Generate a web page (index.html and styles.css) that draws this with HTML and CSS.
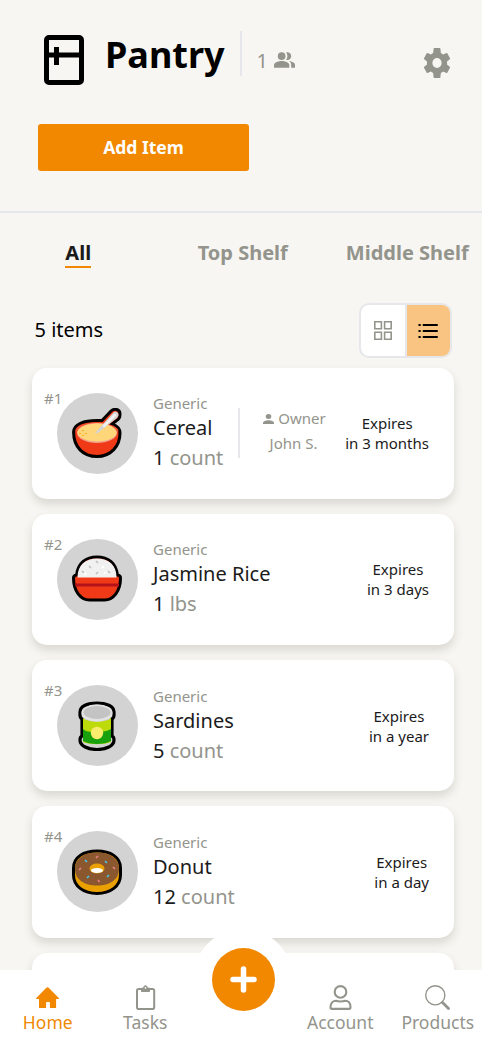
FILE: index.html
```html
<!DOCTYPE html>
<html lang="en">
<head>
<meta charset="utf-8">
<meta name="viewport" content="width=device-width, initial-scale=1">
<title>Pantry</title>
<link rel="stylesheet" href="styles.css">
</head>
<body>
<div class="app">
  <header class="header">
    <div class="title-row">
      <svg class="fridge" viewBox="0 0 40 50" fill="none" stroke="#000" stroke-width="5"><rect x="2.5" y="2.5" width="35" height="45" rx="2.5"/><path d="M3 20h34M12.5 12v18"/></svg>
      <h1 class="title">Pantry</h1>
      <div class="members"><span>1</span>
        <svg class="people" viewBox="1 4 22 16" fill="currentColor"><path d="M16.67 13.13C18.04 14.06 19 15.32 19 17v3h4v-3c0-2.18-3.57-3.47-6.33-3.87zM15 12c2.21 0 4-1.79 4-4s-1.79-4-4-4c-.47 0-.91.1-1.33.24C14.5 5.27 15 6.58 15 8s-.5 2.73-1.33 3.76c.42.14.86.24 1.33.24z"/><circle cx="9" cy="8" r="4"/><path d="M9 13c-2.67 0-8 1.34-8 4v3h16v-3c0-2.66-5.33-4-8-4z"/></svg>
      </div>
      <svg class="gear" viewBox="2 2 20 20" preserveAspectRatio="none" fill="currentColor"><path d="M19.14 12.94c.04-.3.06-.61.06-.94 0-.32-.02-.64-.07-.94l2.03-1.58c.18-.14.23-.41.12-.61l-1.92-3.32c-.12-.22-.37-.29-.59-.22l-2.39.96c-.5-.38-1.03-.7-1.62-.94L14.4 2.410c-.04-.24-.24-.41-.48-.41h-3.84c-.24 0-.43.17-.47.41l-.36 2.940c-.59.24-1.13.57-1.62.94l-2.39-.96c-.22-.08-.47 0-.59.22L2.740 8.870c-.12.21-.08.47.12.61l2.030 1.580c-.05.3-.09.63-.09.94s.02.64.07.94l-2.030 1.580c-.18.14-.23.41-.12.61l1.920 3.320c.12.22.37.29.59.22l2.390-.96c.5.38 1.030.7 1.620.94l.36 2.940c.05.24.24.41.48.41h3.840c.24 0 .44-.17.47-.41l.36-2.940c.59-.24 1.130-.56 1.620-.94l2.390.96c.22.08.47 0 .59-.22l1.920-3.320c.12-.22.07-.47-.12-.61l-2.010-1.580zM12 15.300A3.300 3.300 0 1 1 12 8.700a3.300 3.300 0 0 1 0 6.600z"/></svg>
    </div>
    <button class="add">Add Item</button>
  </header>
  <nav class="tabs">
    <div class="tab active"><span>All</span></div>
    <div class="tab"><span>Top Shelf</span></div>
    <div class="tab"><span>Middle Shelf</span></div>
  </nav>
  <div class="toolbar">
    <span class="count">5 items</span>
    <div class="toggle">
      <div class="view"><svg width="18" height="19" viewBox="0 0 18 19" fill="none" stroke="#93948c" stroke-width="1.6"><path d="M.8.8h6.6v6.9H.8zM10.6.8h6.6v6.9h-6.6zM.8 11.3h6.6v6.9H.8zM10.6 11.3h6.6v6.9h-6.6z"/></svg></div>
      <div class="view on"><svg width="20" height="16" viewBox="0 0 20 16" fill="none" stroke="#000" stroke-width="2"><path d="M5.5 2H19M5.5 8H19M5.5 14H19" stroke-linecap="round"/><path d="M.5 2h2.2M.5 8h2.2M.5 14h2.2" stroke-width="2.2"/></svg></div>
    </div>
  </div>
  <main class="list">
    <article class="card">
      <span class="num">#1</span>
      <div class="avatar"><svg viewBox="0 0 50 50"><path d="M1.6 24C1.6 16 12 12.500 25 12.500h5L39 3C42 .2 48 1 48 6c0 4-1 5-4 7l-4 3q8 3 8 9c0 13-9 23.500-23 23.500S1.600 39 1.600 24z" fill="#f03a17" stroke="#000" stroke-width="3"/><path d="M3.500 22c4-10 37-10 43 0-2 12-39 12-43 0z" fill="#f3502c"/><ellipse cx="25" cy="25" rx="20" ry="10" fill="#f3a08b"/><ellipse cx="25" cy="24.500" rx="19.500" ry="9" fill="#ffd67a"/><path d="M23 25 40 6q3-4 5.500-1.500t-1 6L28 23q-2 3-5 2z" fill="#d3d3d3"/><path d="m32 18 11-11" stroke="#f2f2f2" stroke-width="2.500" stroke-linecap="round"/><path d="M11 22v1M8 25v1M14 25v1M11 27v1" stroke="#f9a000" stroke-width="1.500"/></svg></div>
      <div class="info"><small>Generic</small><b>Cereal</b><p>1 <i>count</i></p></div>
      <div class="owner"><span><svg viewBox="4 4 16 16" preserveAspectRatio="none" fill="currentColor"><circle cx="12" cy="8" r="4"/><path d="M12 14c-2.670 0-8 1.340-8 4v2h16v-2c0-2.660-5.330-4-8-4z"/></svg>Owner</span><span class="person">John S.</span></div>
      <div class="expires">Expires<br>in 3 months</div>
    </article>
    <article class="card">
      <span class="num">#2</span>
      <div class="avatar"><svg viewBox="0 0 50 50"><path d="M1.500 24q0-2.500 3-3C6 9 14 3 25 3s19 6 20.500 18q3 .5 3 3c0 13-7 22-16 22h-15c-9 0-16-9-16-22z" fill="#f03a17" stroke="#000" stroke-width="3"/><path d="M5.500 23.500C5.500 11 13.500 4.500 25 4.500s19.500 6.500 19.500 19z" fill="#f1f1f1"/><path d="M3 29.500h44v3H3.500z" fill="#b4121b"/><path d="m24 7 2 2M17 12l2 2M24 20l2-2M36 17l2 2M10 17l2 2" stroke="#bdbdbd" stroke-width="1.500"/><path d="m30 14 2-2M12 19l2 2M32 20l2-2" stroke="#fff" stroke-width="2"/></svg></div>
      <div class="info"><small>Generic</small><b>Jasmine Rice</b><p>1 <i>lbs</i></p></div>
      <div class="expires">Expires<br>in 3 days</div>
    </article>
    <article class="card">
      <span class="num">#3</span>
      <div class="avatar"><svg viewBox="0 0 50 50"><path d="M8 11C8 5 16 2 25 2s17 3 17 9v3q0 3-2 4v17q2 1 2 4c0 6-8 9.500-17 9.500S8 45 8 39q0-3 2-4V18q-2-1-2-4z" fill="#d3d3d3" stroke="#000" stroke-width="3.200"/><path d="M11 17c6 5 22 5 28 0v24c-7 3-21 3-28 0z" fill="#bddb0b"/><path d="M11 28c5 4 9 3 14 1 5 2 9 2 14-1v12c-6 4-22 4-28 0z" fill="#18a10d"/><ellipse cx="25" cy="12" rx="15.500" ry="8.500" fill="#e3e3e3"/><ellipse cx="25" cy="11.500" rx="13.500" ry="6.500" fill="#c3c3c3"/><circle cx="25" cy="32" r="6.200" fill="#faec6d"/></svg></div>
      <div class="info"><small>Generic</small><b>Sardines</b><p>5 <i>count</i></p></div>
      <div class="expires">Expires<br>in a year</div>
    </article>
    <article class="card">
      <span class="num">#4</span>
      <div class="avatar"><svg viewBox="0 0 50 50"><path d="M1.500 21C1.500 10 11.500 4 25 4s23.500 6 23.500 17v7c0 11-10 18.500-23.500 18.500S1.500 39 1.500 28z" fill="#e9a000" stroke="#000" stroke-width="3"/><path d="M3 22C3 11 13 5.500 25 5.500S47 11 47 22 37 38.500 25 38.500 3 33 3 22z" fill="#8b572f"/><ellipse cx="25" cy="21.500" rx="7.500" ry="5" fill="#e9a000"/><ellipse cx="25" cy="23.500" rx="6" ry="2.500" fill="#fff"/><path d="m13 13 2 2M33 14l2 2M35 30l2-2M15 31l2-2" stroke="#48c5e8" stroke-width="1.600"/><path d="m24 11 2-2M7 23l2-2M41 20l2 2M26 33l1.500 2" stroke="#e98087" stroke-width="1.600"/></svg></div>
      <div class="info"><small>Generic</small><b>Donut</b><p>12 <i>count</i></p></div>
      <div class="expires">Expires<br>in a day</div>
    </article>
    <article class="card"></article>
  </main>
  <nav class="bottom">
    <div class="plus"><svg width="63" height="63" viewBox="0 0 63 63"><circle cx="31.500" cy="31.500" r="31.500" fill="#f18800"/><path d="M31.500 21v21M21 31.500h21" stroke="#fff" stroke-width="5.500" stroke-linecap="round"/></svg></div>
    <a class="item current"><svg viewBox="0 0 25 25" fill="currentColor"><path d="M12.500 2.200q.6 0 1.200.6L23.800 13q.4.500.2.800-.2.300-.8.300h-2.100v9h-6.200v-5.200q0-.8-.8-.8h-2.200q-.8 0-.8.8v5.200H4v-9H1.900q-.6 0-.8-.3-.2-.3.2-.8L11.300 2.800q.6-.6 1.200-.6z"/></svg>Home</a>
    <a class="item"><svg viewBox="0 0 25 25" fill="none" stroke="currentColor" stroke-width="2"><rect x="4" y="4" width="17.200" height="20" rx="1.800"/><path d="M8.500 3.200h2q.2-2.500 2-2.500t2 2.500h2v3.300h-8z" fill="currentColor" stroke-width="1"/><circle cx="12.500" cy="2.800" r=".9" fill="#fff" stroke="none"/></svg>Tasks</a>
    <div class="item"></div>
    <a class="item"><svg viewBox="0 0 25 25" fill="none" stroke="currentColor" stroke-width="2.100"><circle cx="12.500" cy="6.900" r="5.800"/><path d="M4 23.900h17q1.500 0 1.500-1.600c0-4.400-2.500-6.500-5.500-6.500-2 .9-7 .9-9 0-3 0-5.500 2.100-5.500 6.500Q2.500 23.900 4 23.900z"/></svg>Account</a>
    <a class="item"><svg viewBox="0 0 25 25" fill="none" stroke="currentColor"><circle cx="10.300" cy="10.300" r="9.600" stroke-width="1.400"/><path d="m17.500 17.500 6 6" stroke-width="2.800" stroke-linecap="round"/></svg>Products</a>
  </nav>
</div>
</body>
</html>
```

FILE: styles.css
```css
* { box-sizing: border-box; }
body { margin: 0; background: #f7f6f2; color: #000; font-family: "Noto Sans", sans-serif; }
.app { height: 1046px; overflow: hidden; display: flex; flex-direction: column; }
.header { flex: none; height: 213px; border-bottom: 2px solid #e5e7eb; padding: 31px 30px 0 38px; }
.title-row { display: flex; height: 93px; align-items: flex-start; }
.fridge { width: 40px; height: 50px; margin: 4px 21px 0 6px; }
.title { margin: 0; width: 135px; font-size: 36px; line-height: 47px; font-weight: 700; }
.members { display: flex; align-items: center; height: 45px; border-left: 2px solid #e5e7eb; padding: 14px 0 0 14.500px; gap: 6.500px; color: #93948c; font-size: 20px; }
.people { width: 21px; height: 16px; margin-top: -2px; }
.gear { width: 28px; height: 30px; margin: 17px 1px 0 auto; color: #93948c; }
.add { display: block; width: 211px; height: 47px; padding: 0 0 2px; border: 0; border-radius: 3px; background: #f18800; color: #fff; font: 700 17.5px "Noto Sans", sans-serif; }
.tabs { flex: none; display: flex; width: 495px; margin-left: -4px; height: 90px; padding-top: 26px; color: #93948c; font-size: 20px; font-weight: 700; }
.tab { width: 164.500px; flex: none; text-align: center; white-space: nowrap; }
.tab span { display: inline-block; line-height: 27px; }
.active span { color: #1b1b1b; border-bottom: 2px solid #f18800; }
.toolbar { flex: none; display: flex; align-items: center; justify-content: space-between; height: 55px; padding: 0 30px 0 34.500px; font-size: 20px; }
.count { padding-bottom: 2px; }
.toggle { display: flex; width: 93px; height: 55px; border: 2px solid #e5e7eb; border-radius: 10px; overflow: hidden; background: #fff; }
.view { width: 44px; display: grid; place-items: center; }
.on { flex: 1; padding-right: 2px; background: #f9c481; border-left: 2px solid #e5e7eb; }
.list { display: flex; flex-direction: column; gap: 15px; padding: 9.600px 28px 0 32px; }
.card { flex: none; position: relative; display: flex; align-items: center; height: 131.250px; padding: 0 25px; border-radius: 15px; background: #fff; box-shadow: 0 5px 10px rgba(60, 55, 40, .16); }
.num { position: absolute; left: 12px; top: 19px; color: #93948c; font-size: 15px; line-height: 22px; }
.avatar { flex: none; width: 81px; height: 81px; border-radius: 50%; background: #d3d3d3; display: grid; place-items: center; }
.avatar svg { width: 50px; height: 50px; margin-right: 1px; }
.info { margin-left: 15px; display: flex; flex-direction: column; white-space: nowrap; color: #1b1b1b; font-size: 20px; }
.info small { font-size: 15px; line-height: 20px; color: #93948c; }
.info b { font-weight: 400; line-height: 30px; }
.info p { margin: 0; line-height: 30px; }
.info i { font-style: normal; color: #93948c; }
.owner { height: 50px; margin-left: 15px; padding-left: 23px; border-left: 2px solid #e5e7eb; display: flex; flex-direction: column; align-items: center; color: #93948c; font-size: 15px; line-height: 25px; white-space: nowrap; }
.owner span { margin-top: -2px; margin-bottom: 2px; }
.owner .person { padding-right: 2px; }
.owner svg { width: 11px; height: 10px; margin-right: 4px; }
.expires { margin-left: auto; text-align: center; white-space: nowrap; font-size: 15px; line-height: 20px; color: #1b1b1b; }
.bottom { position: absolute; top: 970px; left: 0; width: 482px; height: 76px; display: flex; background: #fff; padding-top: 15px; }
.item { flex: none; width: 97.500px; margin-left: -1px; margin-right: 1px; display: flex; flex-direction: column; align-items: center; color: #93948c; font-size: 17.500px; line-height: 25px; }
.item svg { width: 25px; height: 25px; }
.current { color: #f18800; }
.plus { position: absolute; left: 193px; top: -41px; width: 100px; height: 100px; border-radius: 50%; background: #fff; display: grid; place-items: center; }
```
